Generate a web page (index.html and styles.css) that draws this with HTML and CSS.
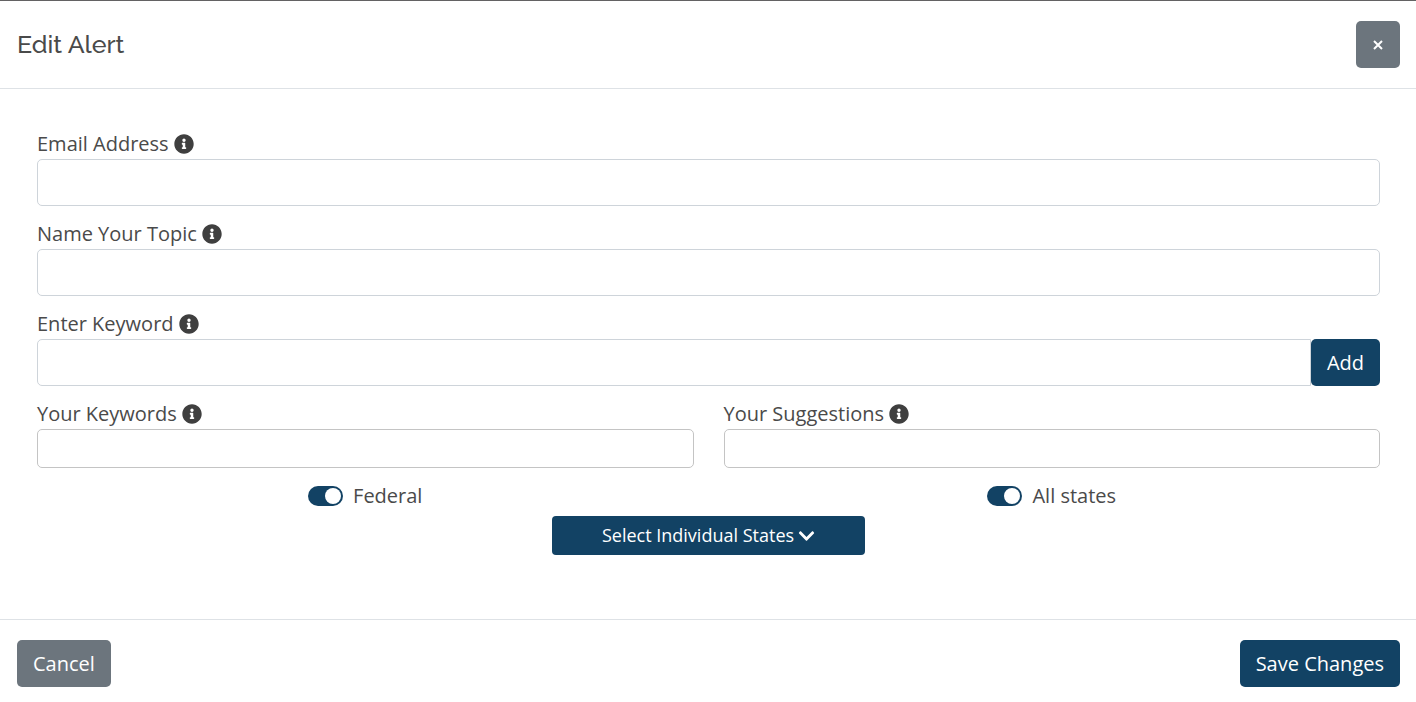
FILE: index.html
```
<!DOCTYPE html>
<html lang="en">
<head>
<meta charset="utf-8">
<meta name="viewport" content="width=device-width, initial-scale=1">
<title>Edit Alert</title>
<link rel="stylesheet" href="styles.css">
</head>
<body>
<svg class="sprite" aria-hidden="true">
  <symbol id="info" viewBox="0 0 512 512"><path d="M256 8C119.043 8 8 119.083 8 256c0 136.997 111.043 248 248 248s248-111.003 248-248C504 119.083 392.957 8 256 8zm0 110c23.196 0 42 18.804 42 42s-18.804 42-42 42-42-18.804-42-42 18.804-42 42-42zm56 254c0 6.627-5.373 12-12 12h-88c-6.627 0-12-5.373-12-12v-24c0-6.627 5.373-12 12-12h12v-64h-12c-6.627 0-12-5.373-12-12v-24c0-6.627 5.373-12 12-12h64c6.627 0 12 5.373 12 12v100h12c6.627 0 12 5.373 12 12v24z"/></symbol>
  <symbol id="chevron" viewBox="0 0 448 512"><path d="M207.029 381.476L12.686 187.132c-9.373-9.373-9.373-24.569 0-33.941l22.667-22.667c9.357-9.357 24.522-9.375 33.901-.04L224 284.505l154.745-154.021c9.379-9.335 24.544-9.317 33.901.04l22.667 22.667c9.373 9.373 9.373 24.569 0 33.941L240.971 381.476c-9.373 9.372-24.569 9.372-33.942 0z"/></symbol>
</svg>
<form class="modal">
  <header class="modal-header">
    <h1 class="modal-title">Edit Alert</h1>
    <button class="btn btn-secondary btn-close" type="button" aria-label="Close">
      <svg class="close-icon" viewBox="0 0 10 10" aria-hidden="true"><path d="M1 1l8 8M9 1l-8 8"/></svg>
    </button>
  </header>
  <main class="modal-body">
    <div class="field">
      <label class="label" for="email">Email Address <svg class="info" aria-hidden="true"><use href="#info"/></svg></label>
      <input class="input" id="email" type="email">
    </div>
    <div class="field">
      <label class="label" for="topic">Name Your Topic <svg class="info" aria-hidden="true"><use href="#info"/></svg></label>
      <input class="input" id="topic" type="text">
    </div>
    <div class="field">
      <label class="label" for="keyword">Enter Keyword <svg class="info" aria-hidden="true"><use href="#info"/></svg></label>
      <div class="input-group">
        <input class="input" id="keyword" type="text">
        <button class="btn btn-primary" type="button">Add</button>
      </div>
    </div>
    <div class="columns">
      <div class="field">
        <label class="label" for="keywords">Your Keywords <svg class="info" aria-hidden="true"><use href="#info"/></svg></label>
        <input class="input input-list" id="keywords" type="text">
      </div>
      <div class="field">
        <label class="label" for="suggestions">Your Suggestions <svg class="info" aria-hidden="true"><use href="#info"/></svg></label>
        <input class="input input-list" id="suggestions" type="text">
      </div>
    </div>
    <div class="scope">
      <div class="columns">
        <label class="switch"><input class="switch-input" type="checkbox" checked>Federal</label>
        <label class="switch"><input class="switch-input" type="checkbox" checked>All states</label>
      </div>
      <button class="btn btn-primary btn-states" type="button">Select Individual States <svg class="chevron" aria-hidden="true"><use href="#chevron"/></svg></button>
    </div>
  </main>
  <footer class="modal-footer">
    <button class="btn btn-secondary" type="button">Cancel</button>
    <button class="btn btn-primary" type="submit">Save Changes</button>
  </footer>
</form>
</body>
</html>
```
FILE: styles.css
```
*, *::before, *::after {
  box-sizing: border-box;
}

body {
  margin: 0;
  border-top: 1px solid #636263;
  background: #fff;
  color: #4a4a4a;
  font-family: "Open Sans", "Noto Sans", sans-serif;
  font-size: 20px;
  line-height: 30px;
}

.sprite {
  display: none;
}

.modal {
  display: flex;
  flex-direction: column;
}

.modal-header,
.modal-footer {
  display: flex;
  justify-content: space-between;
  align-items: flex-start;
  padding: 20px 16px 20px 17px;
}

.modal-header {
  border-bottom: 1px solid #dee2e6;
}

.modal-footer {
  border-top: 1px solid #dee2e6;
}

.modal-title {
  margin: 0;
  padding-top: 8px;
  font-family: Raleway, Lato, sans-serif;
  font-size: 25px;
  font-weight: 500;
  line-height: 30px;
}

.modal-body {
  display: flex;
  flex-direction: column;
  gap: 13px;
  padding: 40px 36px 64px 37px;
}

.field {
  display: flex;
  flex-direction: column;
}

.label {
  display: flex;
  align-items: center;
  gap: 5px;
}

.info {
  width: 20px;
  height: 20px;
  fill: #3f3f3f;
}

.input {
  width: 100%;
  height: 47px;
  padding: 8px 12px;
  border: 1px solid #ced4da;
  border-radius: 5px;
  background: #fff;
  color: inherit;
  font: inherit;
}

.input-list {
  height: 39px;
  border-color: #c4c4c4;
}

.input-group {
  display: flex;
}

.input-group .input {
  flex: 1;
  border-radius: 5px 0 0 5px;
}

.columns {
  display: grid;
  grid-template-columns: 1fr 1fr;
  gap: 30px;
}

.scope {
  display: flex;
  flex-direction: column;
  gap: 5px;
}

.switch {
  display: flex;
  justify-content: center;
  align-items: center;
  gap: 10px;
}

.switch-input {
  display: flex;
  justify-content: flex-end;
  width: 35px;
  height: 20px;
  margin: 0;
  padding: 2px;
  appearance: none;
  border-radius: 10px;
  background: #124264;
}

.switch-input::before {
  content: "";
  width: 16px;
  border-radius: 50%;
  background: #fff;
}

.switch-input:not(:checked) {
  justify-content: flex-start;
  background: #adb5bd;
}

.btn {
  height: 47px;
  padding: 8px 16px;
  border: 0;
  border-radius: 5px;
  color: #fff;
  font: inherit;
  font-weight: 500;
  cursor: pointer;
}

.btn-primary {
  background: #124264;
}

.btn-secondary {
  background: #6c757d;
}

.btn-close {
  display: flex;
  align-items: center;
}

.close-icon {
  width: 12px;
  height: 10px;
  fill: none;
  stroke: #fff;
  stroke-width: 2;
}

.btn-states {
  display: flex;
  justify-content: center;
  align-items: center;
  align-self: center;
  gap: 4px;
  width: calc((100% + 30px) / 4 - 30px);
  min-width: 260px;
  height: 39px;
  padding: 4px 8px;
  border-radius: 4px;
  font-size: 18px;
  font-weight: 400;
  line-height: 27px;
}

.chevron {
  width: 17px;
  height: 18px;
  fill: #fff;
}
```
